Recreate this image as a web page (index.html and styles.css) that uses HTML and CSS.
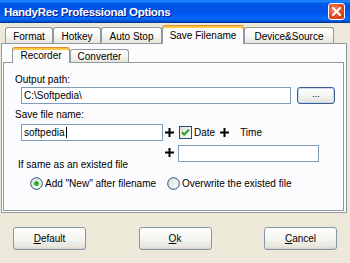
FILE: index.html
```html
<!DOCTYPE html>
<html>
<head>
<meta charset="utf-8">
<link rel="stylesheet" href="styles.css">
</head>
<body>
<div class="window">
  <div class="titlebar">
    <span class="title">HandyRec Professional Options</span>
    <span class="close"><svg width="9" height="9" viewBox="0 0 9 9"><path d="M1 1L8 8M8 1L1 8" stroke="#fff" stroke-width="2" stroke-linecap="square"/></svg></span>
  </div>
  <div class="tabstrip outer-tabs">
    <div class="tab w-format">Format</div>
    <div class="tab w-hotkey">Hotkey</div>
    <div class="tab w-autostop">Auto Stop</div>
    <div class="tab active w-save">Save Filename</div>
    <div class="tab w-device">Device&amp;Source</div>
  </div>
  <div class="outer-panel">
    <div class="tabstrip inner-tabs">
      <div class="tab active small w-recorder">Recorder</div>
      <div class="tab small w-converter">Converter</div>
    </div>
    <div class="inner-panel">
      <div class="label">Output path:</div>
      <div class="path-row">
        <div class="input path-input">C:\Softpedia\</div>
        <div class="btn browse">...</div>
      </div>
      <div class="label l-save">Save file name:</div>
      <div class="name-grid">
        <div class="input name-input">softpedia<span class="caret"></span></div>
        <svg class="plus" width="9" height="9" viewBox="0 0 9 9"><path d="M0 4.5H9M4.5 0V9" stroke="#000" stroke-width="2"/></svg>
        <div class="date-group">
          <svg class="check" width="13" height="13" viewBox="0 0 13 13"><defs><linearGradient id="cg" x1="0" y1="0" x2="1" y2="1"><stop offset="0" stop-color="#DCDCD7"/><stop offset="1" stop-color="#FFFFFF"/></linearGradient></defs><rect x="0.5" y="0.5" width="12" height="12" fill="url(#cg)" stroke="#1C5180"/><path d="M3 6.2L5.2 8.6L10 3.6" fill="none" stroke="#21A121" stroke-width="2"/></svg>
          <span class="date-text">Date</span>
          <svg class="plus plus-mid" width="9" height="9" viewBox="0 0 9 9"><path d="M0 4.5H9M4.5 0V9" stroke="#000" stroke-width="2"/></svg>
          <span class="time-text">Time</span>
        </div>
        <div class="label same">If same as an existed file</div>
        <svg class="plus plus-low" width="9" height="9" viewBox="0 0 9 9"><path d="M0 4.5H9M4.5 0V9" stroke="#000" stroke-width="2"/></svg>
        <div class="input extra-input"></div>
      </div>
      <div class="radio-row">
        <div class="radio-item first">
          <svg width="13" height="13" viewBox="0 0 13 13"><defs><linearGradient id="rg" x1="0" y1="0" x2="1" y2="1"><stop offset="0" stop-color="#DCDCD7"/><stop offset="1" stop-color="#FFFFFF"/></linearGradient></defs><circle cx="6.5" cy="6.5" r="5.8" fill="url(#rg)" stroke="#1C5180"/><circle cx="6.5" cy="6.5" r="2.6" fill="#3FBF3F"/><circle cx="6.5" cy="6.5" r="1.2" fill="#1E9A1E"/></svg>
          <span>Add "New" after filename</span>
        </div>
        <div class="radio-item">
          <svg width="13" height="13" viewBox="0 0 13 13"><circle cx="6.5" cy="6.5" r="5.8" fill="url(#rg)" stroke="#1C5180"/></svg>
          <span>Overwrite the existed file</span>
        </div>
      </div>
    </div>
  </div>
  <div class="buttons">
    <div class="btn dlg"><u>D</u>efault</div>
    <div class="btn dlg"><u>O</u>k</div>
    <div class="btn dlg"><u>C</u>ancel</div>
  </div>
</div>
</body>
</html>
```
FILE: styles.css
```css
html, body {
  margin: 0;
  padding: 0;
}
body {
  width: 350px;
  height: 263px;
  overflow: hidden;
  font-family: "Liberation Sans", Arial, sans-serif;
  font-size: 10px;
  color: #000;
}
.window {
  width: 350px;
  height: 263px;
  display: flex;
  flex-direction: column;
  background: #ECE9D8;
}
.titlebar {
  height: 23px;
  flex: none;
  box-sizing: border-box;
  display: flex;
  align-items: center;
  justify-content: space-between;
  padding: 0 5px 0 4px;
  background: linear-gradient(to bottom, #0058EE 0%, #3593FF 4%, #288EFF 6%, #127DFF 8%, #036FFC 10%, #0262EE 14%, #0057E5 20%, #0054E3 24%, #0055EB 56%, #005BF5 66%, #026AFE 76%, #0062EF 86%, #0052D6 92%, #0040AB 96%, #003092 100%);
}
.title {
  color: #fff;
  font-weight: bold;
  font-size: 11.5px;
  letter-spacing: -0.3px;
  text-shadow: 1px 1px 0 #0A1883;
}
.close {
  width: 17px;
  height: 17px;
  box-sizing: border-box;
  border: 1px solid #fff;
  border-radius: 3px;
  background: radial-gradient(circle at 35% 35%, #F08A6A 0%, #E5532C 45%, #C8381A 100%);
  display: flex;
  align-items: center;
  justify-content: center;
}
.tabstrip {
  display: flex;
  align-items: flex-end;
  flex: none;
}
.outer-tabs {
  height: 20px;
  padding-left: 5px;
}
.inner-tabs {
  height: 18px;
  padding-left: 9px;
}
.tab {
  box-sizing: border-box;
  height: 16px;
  border: 1px solid #919B9C;
  border-bottom: 0;
  border-radius: 3px 3px 0 0;
  background: linear-gradient(to bottom, #FFFFFF 0%, #F6F6F2 55%, #E6E5DD 100%);
  display: flex;
  align-items: center;
  justify-content: center;
  font-size: 10px;
  padding-top: 1px;
}
.tab.active {
  height: 19px;
  margin-bottom: -1px;
  background: #FCFCFE;
  border-top-color: #E68B2C;
  box-shadow: inset 0 2px 0 #FFC83C;
  position: relative;
  z-index: 1;
  padding-top: 0;
}
.tab.small {
  height: 13px;
}
.tab.small.active {
  height: 16px;
}
.w-format { width: 48px; }
.w-hotkey { width: 48px; }
.w-autostop { width: 61px; }
.w-save { width: 82px; }
.w-device { width: 90px; }
.w-recorder { width: 58px; }
.w-converter { width: 59px; }
.outer-panel {
  margin-left: 1px;
  width: 346px;
  height: 170px;
  flex: none;
  box-sizing: border-box;
  border: 1px solid #919B9C;
  background: #FCFCFE;
  padding: 0 2px 1px 1px;
  display: flex;
  flex-direction: column;
}
.inner-panel {
  flex: 1;
  box-sizing: border-box;
  border: 1px solid #919B9C;
  background: #FCFCFE;
  padding: 11px 0 0 11px;
}
.label {
  line-height: 12px;
  font-size: 10px;
}
.path-row {
  margin-top: 1px;
  display: flex;
  align-items: center;
}
.input {
  box-sizing: border-box;
  height: 17px;
  border: 1px solid #7F9DB9;
  background: #fff;
  padding-left: 2px;
  line-height: 15px;
  font-size: 10px;
  display: flex;
  align-items: center;
}
.path-input {
  width: 270px;
  margin-left: 6px;
}
.btn {
  box-sizing: border-box;
  border-radius: 3px;
  background: linear-gradient(to bottom, #FFFFFF 0%, #F5F5F1 50%, #E6E5DE 90%, #D6D0C5 100%);
  display: flex;
  align-items: center;
  justify-content: center;
  font-size: 10px;
}
.browse {
  width: 38px;
  height: 17px;
  margin-left: 6px;
  border: 1px solid #3A5F8F;
  box-shadow: inset 0 0 0 1px #C8D8EE;
  padding-bottom: 3px;
  font-size: 9px;
}
.l-save {
  margin-top: 5px;
}
.name-grid {
  margin-top: 3px;
  display: grid;
  grid-template-columns: 148px 15px 1fr;
  row-gap: 4px;
  align-items: center;
}
.name-input {
  width: 142px;
  margin-left: 6px;
}
.caret {
  display: inline-block;
  width: 1px;
  height: 11px;
  background: #000;
  margin-left: 1px;
}
.plus {
  margin-left: 2px;
  display: block;
}
.date-group {
  display: flex;
  align-items: center;
  padding-left: 1px;
}
.check {
  display: block;
}
.date-text {
  margin-left: 2px;
}
.plus-mid {
  margin-left: 5px;
}
.time-text {
  margin-left: 11px;
}
.same {
  align-self: start;
  margin-top: 14px;
  margin-left: 3px;
}
.plus-low {
  align-self: start;
  margin-top: 3px;
}
.extra-input {
  align-self: start;
  width: 141px;
}
.radio-row {
  margin-top: 6px;
  display: flex;
  align-items: center;
  padding-left: 15px;
}
.radio-item {
  display: flex;
  align-items: center;
  gap: 2px;
}
.radio-item svg {
  display: block;
}
.radio-item.first {
  width: 137px;
}
.buttons {
  margin-top: 14px;
  padding: 0 13px;
  display: flex;
  justify-content: space-between;
}
.dlg {
  width: 73px;
  height: 23px;
  border: 1px solid #8594A8;
}
```
